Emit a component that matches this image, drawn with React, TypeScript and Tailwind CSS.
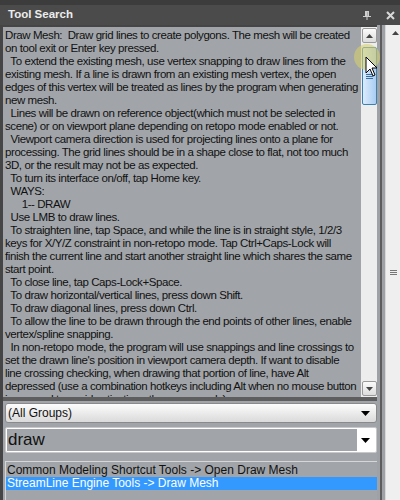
import React from "react";

const lines = [
  "Draw Mesh:  Draw grid lines to create polygons. The mesh will be created",
  "on tool exit or Enter key pressed.",
  "  To extend the existing mesh, use vertex snapping to draw lines from the",
  "existing mesh. If a line is drawn from an existing mesh vertex, the open",
  "edges of this vertex will be treated as lines by the program when generating",
  "new mesh.",
  "  Lines will be drawn on reference object(which must not be selected in",
  "scene) or on viewport plane depending on retopo mode enabled or not.",
  "  Viewport camera direction is used for projecting lines onto a plane for",
  "processing. The grid lines should be in a shape close to flat, not too much",
  "3D, or the result may not be as expected.",
  "  To turn its interface on/off, tap Home key.",
  "  WAYS:",
  "      1-- DRAW",
  "  Use LMB to draw lines.",
  "  To straighten line, tap Space, and while the line is in straight style, 1/2/3",
  "keys for X/Y/Z constraint in non-retopo mode. Tap Ctrl+Caps-Lock will",
  "finish the current line and start another straight line which shares the same",
  "start point.",
  "  To close line, tap Caps-Lock+Space.",
  "  To draw horizontal/vertical lines, press down Shift.",
  "  To draw diagonal lines, press down Ctrl.",
  "  To allow the line to be drawn through the end points of other lines, enable",
  "vertex/spline snapping.",
  "  In non-retopo mode, the program will use snappings and line crossings to",
  "set the drawn line's position in viewport camera depth. If want to disable",
  "line crossing checking, when drawing that portion of line, have Alt",
  "depressed (use a combination hotkeys including Alt when no mouse button",
  "is pressed to avoid activating other commands) or use a mouse",
];

const font = { fontFamily: '"Liberation Sans", Arial, sans-serif' };

const Arrow = ({ up }: { up?: boolean }) => (
  <svg width="7" height="4" viewBox="0 0 7 4">
    <path d={up ? "M0 4 L3.5 0 L7 4 Z" : "M0 0 L7 0 L3.5 4 Z"} fill="#444" />
  </svg>
);

const DropArrow = () => (
  <svg width="9" height="5" viewBox="0 0 9 5">
    <path d="M0 0 L9 0 L4.5 5 Z" fill="#000" />
  </svg>
);

// right side column strip (neighbouring panel edge)
const SideStrip = () => (
  <div className="flex h-full">
    <div className="w-[3px] bg-[#9ea2a6]" />
    <div className="w-[2px] bg-[#5c5c5c]" />
    <div className="w-[3px] bg-[#9ea2a6]" />
    <div className="relative w-[15px] bg-[#efefef] border-l border-[#d8d8d8]">
      <div className="absolute left-[6px] top-[6px]">
        <Arrow up />
      </div>
      <div className="absolute left-[4px] top-[245px] flex flex-col gap-[1px]">
        <div className="w-[7px] h-[1px] bg-[#777]" />
        <div className="w-[7px] h-[1px] bg-[#777]" />
        <div className="w-[7px] h-[1px] bg-[#777]" />
      </div>
    </div>
  </div>
);

export default function App() {
  return (
    <div className="relative w-[400px] h-[500px] bg-[#454545] overflow-hidden flex flex-col" style={font}>
      {/* TITLE */}
      <div className="h-[5px] bg-[#3c3c3c]" />
      <div className="h-[20px] bg-[#4b4b4b] flex items-center pl-[8px] pr-[5px]">
        <span className="text-[11.5px] font-bold text-[#ececec]">Tool Search</span>
        <div className="ml-auto flex items-center gap-[15px]">
          <svg width="8" height="9" viewBox="0 0 8 9">
            <path d="M2 0 H6 V5 H8 V6 H4.5 V9 H3.5 V6 H0 V5 H2 Z" fill="#cfcfcf" />
            <path d="M4.5 1 H5 V5 H4.5 Z" fill="#8a8a8a" />
          </svg>
          <svg width="9" height="9" viewBox="0 0 9 9">
            <path d="M1 1 L8 8 M8 1 L1 8" stroke="#d8d8d8" strokeWidth="2" />
          </svg>
        </div>
      </div>

      <div className="flex flex-1 min-h-0">
        {/* LEFT PANEL */}
        <div className="w-[377px] flex flex-col pl-[3px] pt-[2px] bg-[#454545]">
          {/* TEXT AREA */}
          <div className="h-[370px] flex bg-[#a1a5a9]">
            <div className="flex-1 overflow-hidden pl-[2px] pt-[2px] text-[11.5px] leading-[13px] text-[#111]">
              {lines.map((l, i) => (
                <div key={i} className="whitespace-pre tracking-[-0.42px]">
                  {l}
                </div>
              ))}
            </div>
            <div className="w-[16px] bg-[#ededed] flex flex-col items-center pt-[1px]">
              <div className="w-[15px] h-[15px] border border-[#9a9a9a] rounded-[2px] bg-gradient-to-b from-[#fbfbfb] to-[#dcdcdc] flex items-center justify-center">
                <Arrow up />
              </div>
              <div className="mt-[4px] w-[15px] h-[58px] border border-[#3c7fb1] rounded-[2px] bg-gradient-to-r from-[#dcebfc] to-[#a9cdf3] flex flex-col items-center justify-center gap-[1px]">
                <div className="w-[7px] h-[1px] bg-[#3c6ea0]" />
                <div className="w-[7px] h-[1px] bg-[#3c6ea0]" />
                <div className="w-[7px] h-[1px] bg-[#3c6ea0]" />
              </div>
              <div className="mt-auto mb-[1px] w-[15px] h-[15px] border border-[#9a9a9a] rounded-[2px] bg-gradient-to-b from-[#fbfbfb] to-[#dcdcdc] flex items-center justify-center">
                <Arrow />
              </div>
            </div>
          </div>
          <div className="h-[4px] bg-[#5e5e5e]" />

          {/* CONTROLS */}
          <div className="flex-1 bg-[#a1a5a9] pl-[2px] pt-[2px] flex flex-col">
            <div className="h-[20px] rounded-[3px] border border-[#8a8a8a] bg-gradient-to-b from-[#fdfdfd] to-[#dadada] flex items-center pl-[2px] pr-[6px] text-[12px] text-[#111]">
              <span>(All Groups)</span>
              <div className="ml-auto">
                <DropArrow />
              </div>
            </div>
            <div className="mt-[4px] h-[26px] bg-white rounded-[2px] border border-[#c8c8c8] flex items-center p-[1px] pr-[6px]">
              <div className="h-full w-[350px] bg-[#a1a5a9] flex items-center pl-[1px] text-[17px] text-[#111]">
                draw
              </div>
              <div className="ml-auto">
                <DropArrow />
              </div>
            </div>
            <div className="mt-[8px] flex-1 border-t border-l border-[#d6d6d6] pt-[2px] text-[12px] leading-[13px]">
              <div className="pl-[1px] text-[#111] h-[13px]">Common Modeling Shortcut Tools -&gt; Open Draw Mesh</div>
              <div className="pl-[1px] h-[13px] bg-[#3399ff] text-white">StreamLine Engine Tools -&gt; Draw Mesh</div>
            </div>
          </div>
        </div>

        {/* RIGHT EDGE */}
        <div className="flex-1">
          <SideStrip />
        </div>
      </div>

      {/* mouse cursor overlay */}
      <svg className="absolute left-[352px] top-[42px]" width="30" height="40" viewBox="0 0 30 40">
        <circle cx="15" cy="15" r="13" fill="rgba(214,206,110,0.6)" />
        <path d="M14 15 L14 31 L18 27 L21 34 L23 33 L20 26 L25 26 Z" fill="#fff" stroke="#000" strokeWidth="1" />
      </svg>
    </div>
  );
}
